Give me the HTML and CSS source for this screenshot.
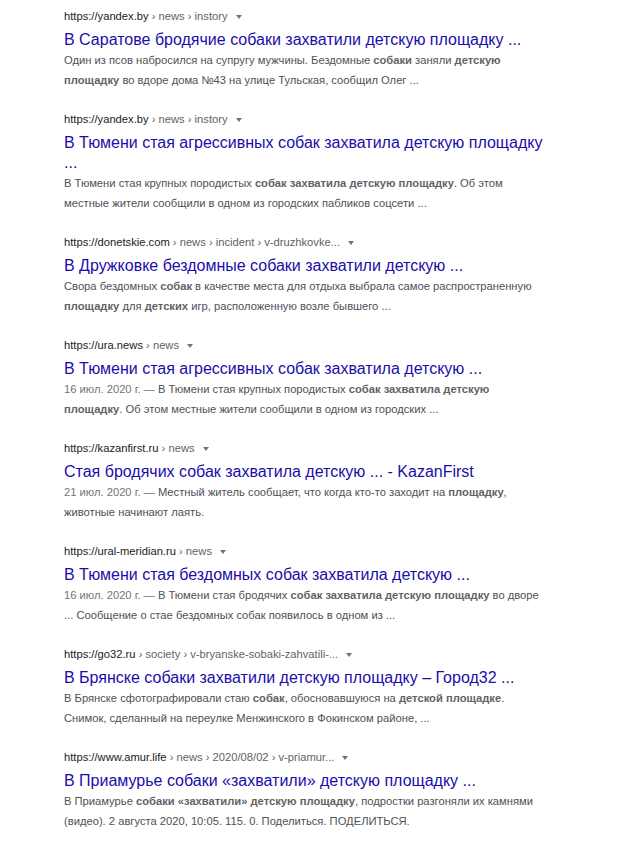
FILE: index.html
```html
<!DOCTYPE html>
<html lang="ru">
<head>
    <meta charset="UTF-8">
    <meta name="viewport" content="width=device-width, initial-scale=1.0">
    <title>собаки захватили детскую площадку</title>
    <link rel="stylesheet" href="styles.css">
</head>
<body>
    <div class="results">

        <div class="result">
            <div class="cite">https://yandex.by<span class="crumbs"> › news › instory</span><span class="arrow"></span></div>
            <a class="title" href="#">В Саратове бродячие собаки захватили детскую площадку ...</a>
            <div class="snippet">Один из псов набросился на супругу мужчины. Бездомные <b>собаки</b> заняли <b>детскую</b><br><b>площадку</b> во вдоре дома №43 на улице Тульская, сообщил Олег ...</div>
        </div>

        <div class="result">
            <div class="cite">https://yandex.by<span class="crumbs"> › news › instory</span><span class="arrow"></span></div>
            <a class="title" href="#">В Тюмени стая агрессивных собак захватила детскую площадку ...</a>
            <div class="snippet">В Тюмени стая крупных породистых <b>собак захватила детскую площадку</b>. Об этом<br>местные жители сообщили в одном из городских пабликов соцсети ...</div>
        </div>

        <div class="result">
            <div class="cite">https://donetskie.com<span class="crumbs"> › news › incident › v-druzhkovke...</span><span class="arrow"></span></div>
            <a class="title" href="#">В Дружковке бездомные собаки захватили детскую ...</a>
            <div class="snippet">Свора бездомных <b>собак</b> в качестве места для отдыха выбрала самое распространенную<br><b>площадку</b> для <b>детских</b> игр, расположенную возле бывшего ...</div>
        </div>

        <div class="result">
            <div class="cite">https://ura.news<span class="crumbs"> › news</span><span class="arrow"></span></div>
            <a class="title" href="#">В Тюмени стая агрессивных собак захватила детскую ...</a>
            <div class="snippet"><span class="date">16 июл. 2020 г. — </span>В Тюмени стая крупных породистых <b>собак захватила детскую</b><br><b>площадку</b>. Об этом местные жители сообщили в одном из городских ...</div>
        </div>

        <div class="result">
            <div class="cite">https://kazanfirst.ru<span class="crumbs"> › news</span><span class="arrow"></span></div>
            <a class="title" href="#">Стая бродячих собак захватила детскую ... - KazanFirst</a>
            <div class="snippet"><span class="date">21 июл. 2020 г. — </span>Местный житель сообщает, что когда кто-то заходит на <b>площадку</b>,<br>животные начинают лаять.</div>
        </div>

        <div class="result">
            <div class="cite">https://ural-meridian.ru<span class="crumbs"> › news</span><span class="arrow"></span></div>
            <a class="title" href="#">В Тюмени стая бездомных собак захватила детскую ...</a>
            <div class="snippet"><span class="date">16 июл. 2020 г. — </span>В Тюмени стая бродячих <b>собак захватила детскую площадку</b> во дворе<br>... Сообщение о стае бездомных собак появилось в одном из ...</div>
        </div>

        <div class="result">
            <div class="cite">https://go32.ru<span class="crumbs"> › society › v-bryanske-sobaki-zahvatili-...</span><span class="arrow"></span></div>
            <a class="title" href="#">В Брянске собаки захватили детскую площадку – Город32 ...</a>
            <div class="snippet">В Брянске сфотографировали стаю <b>собак</b>, обосновавшуюся на <b>детской площадке</b>.<br>Снимок, сделанный на переулке Менжинского в Фокинском районе, ...</div>
        </div>

        <div class="result">
            <div class="cite">https://www.amur.life<span class="crumbs"> › news › 2020/08/02 › v-priamur...</span><span class="arrow"></span></div>
            <a class="title" href="#">В Приамурье собаки «захватили» детскую площадку ...</a>
            <div class="snippet">В Приамурье <b>собаки «захватили» детскую площадку</b>, подростки разгоняли их камнями<br>(видео). 2 августа 2020, 10:05. 115. 0. Поделиться. ПОДЕЛИТЬСЯ.</div>
        </div>

    </div>
</body>
</html>
```

FILE: styles.css
```css
body {
    margin: 0;
    padding: 8px 0 0 64px;
    background-color: #fff;
    font-family: "Liberation Sans", Arial, sans-serif;
}
.results {
    width: 560px;
}
.result {
    margin-bottom: 21px;
}
.cite {
    font-size: 11.2px;
    line-height: 16px;
    color: #202124;
}
.crumbs {
    color: #5f6368;
}
.arrow {
    display: inline-block;
    margin-left: 8px;
    vertical-align: middle;
    border-left: 3px solid transparent;
    border-right: 3px solid transparent;
    border-top: 4px solid #70757a;
}
.title {
    display: block;
    max-width: 480px;
    padding-top: 6px;
    font-size: 16px;
    line-height: 20px;
    color: #1a0dab;
    text-decoration: none;
}
.snippet {
    font-size: 11.2px;
    line-height: 20px;
    color: #4d5156;
    white-space: nowrap;
}
.snippet b {
    color: #5f6368;
}
.date {
    color: #70757a;
}
```
